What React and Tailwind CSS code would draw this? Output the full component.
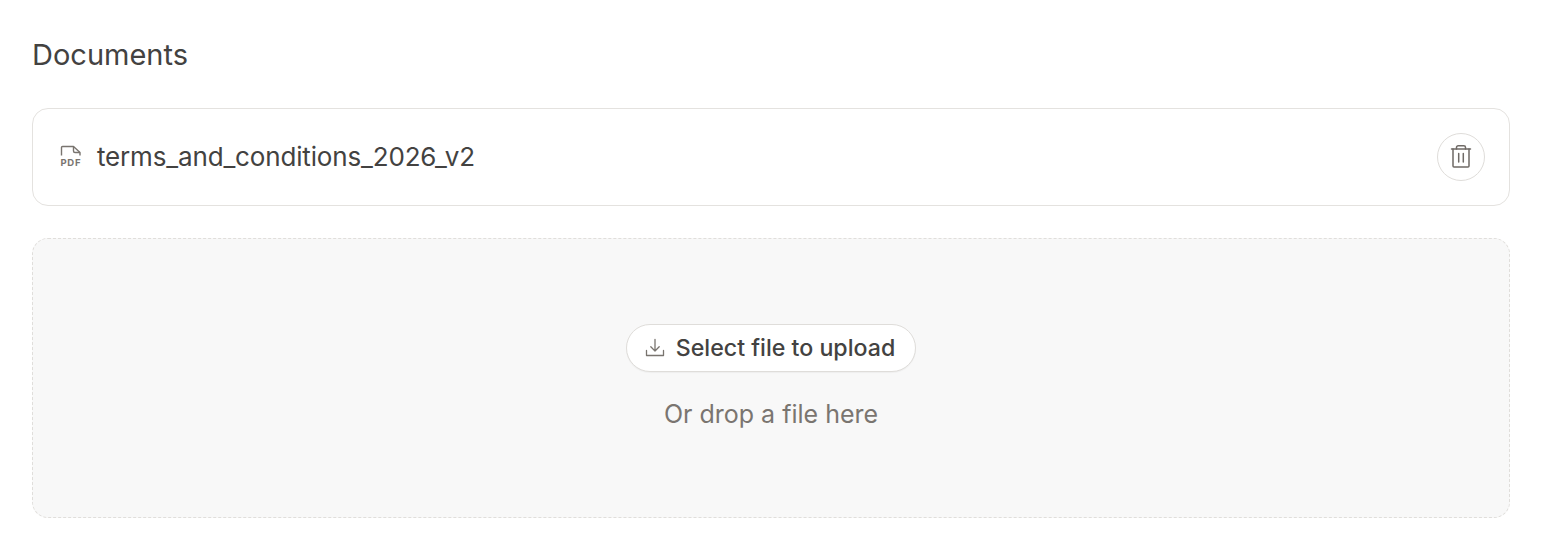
export default function App() {
  return (
    <div className="h-[552px] bg-white pl-8 pr-[34px] pt-[39px] font-['Inter',sans-serif] text-[#434241]">
      <h2 className="text-[29px] leading-[32px] font-normal mb-[37px]">Documents</h2>
      <div className="h-[98px] rounded-[16px] border border-[#e4e2df] flex items-center justify-between pl-[27px] pr-6">
        <div className="flex items-center gap-[15px]">
          <svg width="22" height="24" viewBox="0 0 22 24" fill="none" stroke="#79746f" strokeWidth="1.4" strokeLinejoin="round" className="overflow-visible">
            <path d="M1.5 10.5V2.5a1 1 0 0 1 1-1h11l6.5 6v3" />
            <path d="M13.5 1.5v4.5a1.5 1.5 0 0 0 1.5 1.5h5" />
            <text x="0.5" y="21" fontSize="9.5" fontWeight="700" fill="#79746f" stroke="none" fontFamily="Inter, sans-serif" letterSpacing="0.7">PDF</text>
          </svg>
          <span className="text-[26px] leading-[32px] font-[425] tracking-[-0.16px]">terms_and_conditions_2026_v2</span>
        </div>
        <button className="size-12 rounded-full border border-[#dfddda] bg-white flex items-center justify-center">
          <svg width="24" height="24" viewBox="0 0 24 24" fill="none" stroke="#6f6a66" strokeWidth="1.5" strokeLinecap="round" strokeLinejoin="round" className="overflow-visible">
            <path d="M2.5 4h19" />
            <path d="M7.5 4V2.5a1.7 1.7 0 0 1 1.7-1.7h5.6a1.7 1.7 0 0 1 1.7 1.7V4" />
            <path d="M4 4V21a1 1 0 0 0 1 1h14a1 1 0 0 0 1-1V4" />
            <path d="M9.7 8.5v8.5M14.3 8.5v8.5" />
          </svg>
        </button>
      </div>
      <div className="mt-8 h-[280px] rounded-[16px] border border-dashed border-[#e0dedb] bg-[#f8f8f8] flex flex-col items-center justify-center">
        <button className="h-12 -mt-[2px] pl-[18px] pr-5 rounded-full border border-[#dfddda] bg-white flex items-center gap-[11px] shadow-[0_1px_1px_rgba(0,0,0,0.04)]">
          <svg width="20" height="20" viewBox="0 0 20 20" fill="none" stroke="#79746f" strokeWidth="1.3" strokeLinecap="round" strokeLinejoin="round">
            <path d="M10 1.5v11.5M5.8 8.8 10 13l4.2-4.2" />
            <path d="M1.5 12.5v5h17v-5" />
          </svg>
          <span className="text-[23.2px] leading-[32px] font-[450]">Select file to upload</span>
        </button>
        <p className="mt-[26px] text-[25px] leading-[32px] text-[#7a7570]">Or drop a file here</p>
      </div>
    </div>
  );
}
